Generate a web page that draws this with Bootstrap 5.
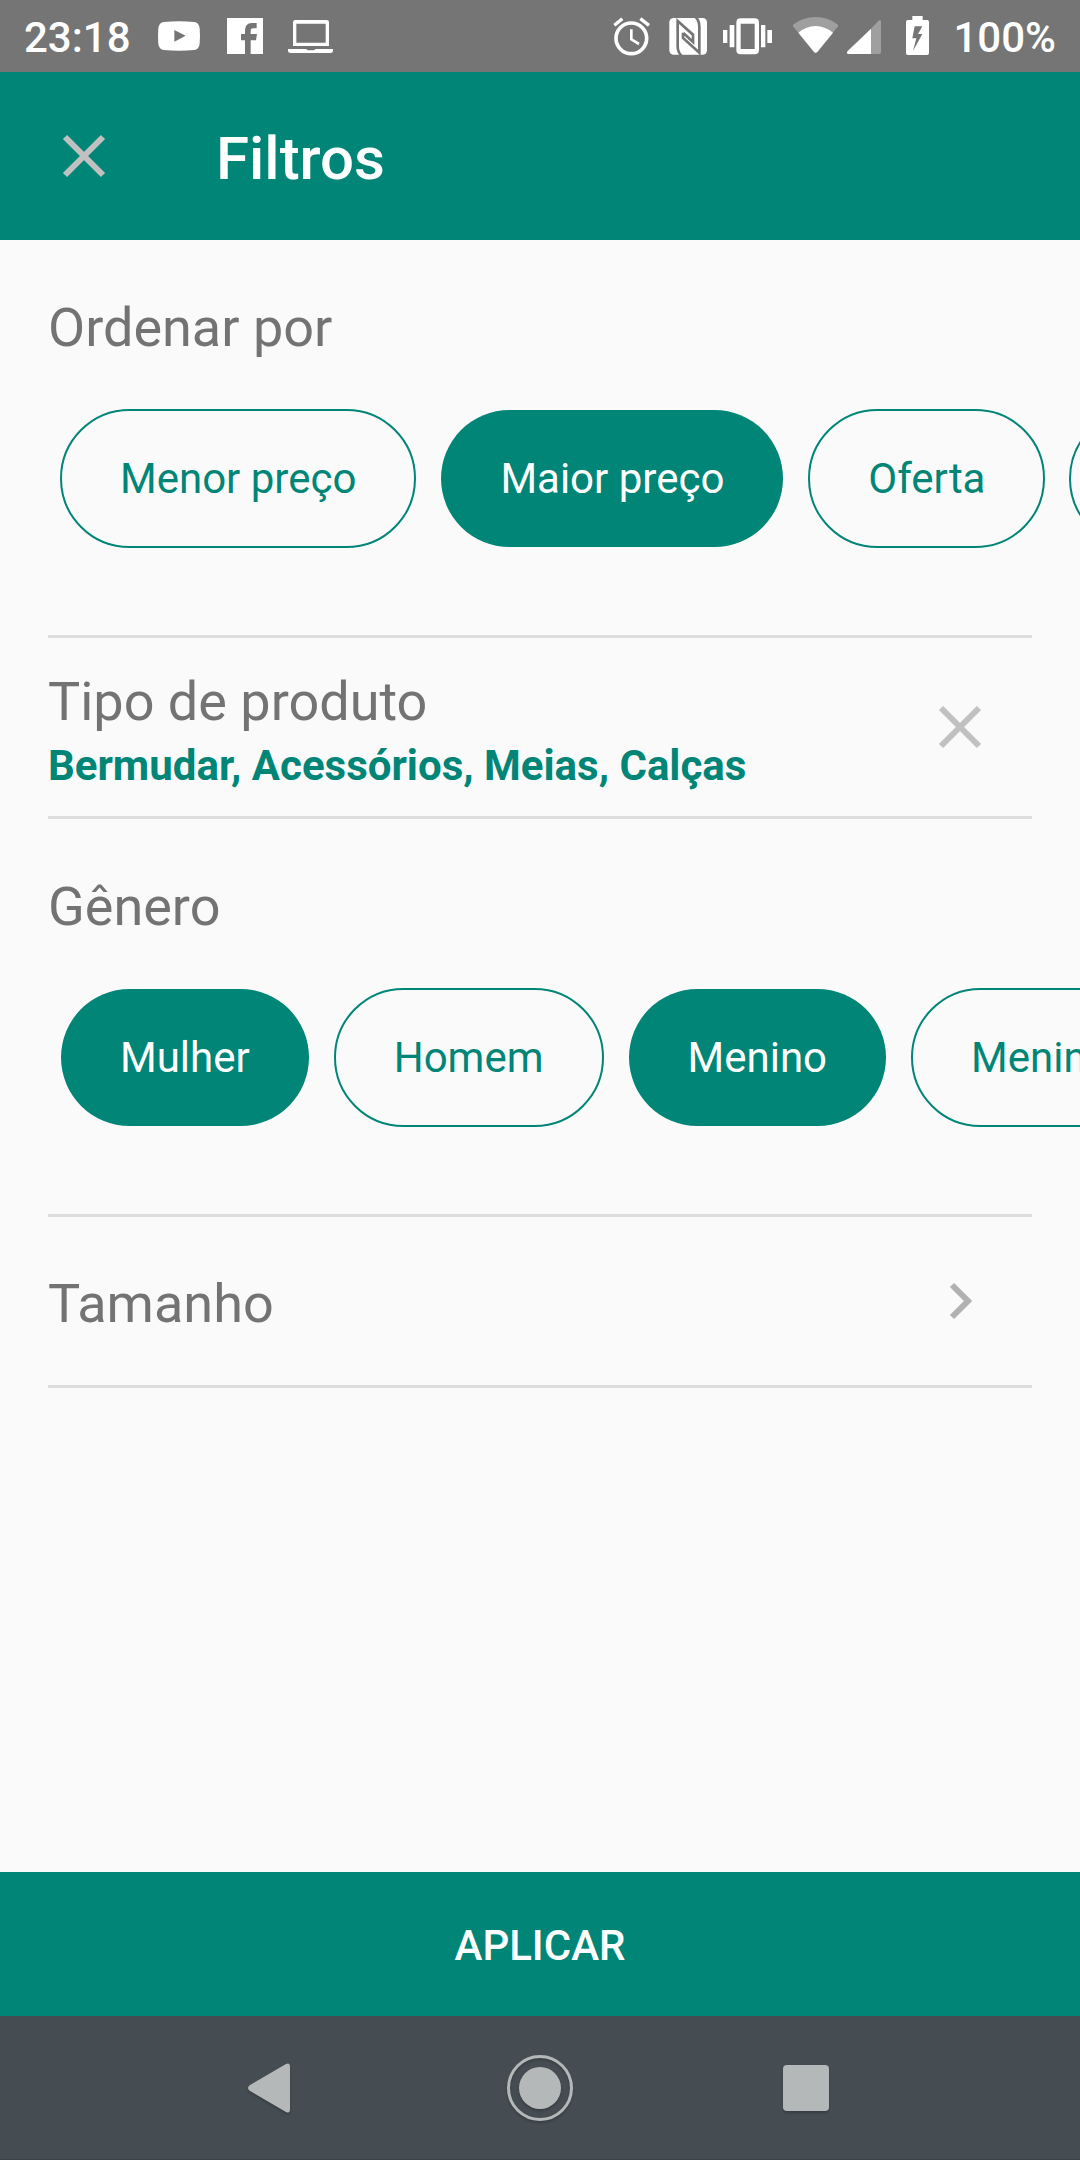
<!DOCTYPE html>
<html lang="pt-BR">
<head>
<meta charset="utf-8">
<meta name="viewport" content="width=device-width, initial-scale=1">
<title>Filtros</title>
<link href="https://cdn.jsdelivr.net/npm/bootstrap@5.3.0/dist/css/bootstrap.min.css" rel="stylesheet">
<style>
  :root { --brand: #008577; --paper: #fafafa; --ink: #737373; --rule: #dddddd; }
  body { font-family: Roboto, "Noto Sans", sans-serif; background: var(--paper); color: var(--ink); }
  svg { display: block; flex: none; }
  .status-bar { height: 72px; background: #757575; color: #fff; padding: 0 24px; font-size: 42px; line-height: 50px; font-weight: 500; }
  .status-bar svg { height: 72px; fill: #fff; }
  .status-text { padding-top: 3px; }
  .status-left { gap: 13px; }
  .status-right { gap: 11px; }
  .app-bar { height: 168px; background: var(--brand); padding-left: 48px; gap: 96px; }
  .app-title { font-size: 60px; line-height: 72px; font-weight: 500; padding-top: 5px; }
  .icon-btn { width: 72px; height: 72px; }
  .filter-block { border-bottom: 3px solid var(--rule); margin: 0 48px; }
  .chip-block { padding: 56px 0 87px; }
  .filter-title { font-size: 54px; line-height: 64px; font-weight: 400; margin: 0; }
  .chip-row { gap: 24px; margin: 49px -48px 0 0; padding-left: 12px; overflow-x: auto; scrollbar-width: none; }
  .chip-row::-webkit-scrollbar { display: none; }
  .chip { flex: none; height: 139px; border: 2px solid var(--brand); border-radius: 70px; padding: 0 58px; font-size: 42px; line-height: 135px; font-weight: 400; color: var(--brand); background-clip: padding-box; }
  .btn-check:checked + .chip { border: 1px solid transparent; padding: 1px 59px; background-color: var(--brand); color: #fff; }
  .type-block { padding: 32px 36px 25px 0; }
  .type-block .icon-btn { margin-bottom: 8px; }
  .type-value { font-size: 42px; line-height: 50px; font-weight: 700; color: var(--brand); margin: 7px 0 0; }
  .size-block { padding: 55px 36px 49px 0; color: var(--ink); }
  .apply-btn { height: 144px; background: var(--brand); font-size: 42px; line-height: 50px; font-weight: 500; padding: 4px 0 0; }
  .apply-btn:hover { background: var(--brand); }
  .nav-keys { height: 144px; background: #454d53; gap: 196px; border-bottom: 1px solid #3c4349; }
  .nav-keys svg { fill: #b4b8b9; filter: drop-shadow(0 2px 1px #0003); }
</style>
</head>
<body class="d-flex flex-column min-vh-100">

<div class="status-bar d-flex align-items-center justify-content-between">
  <div class="status-left d-flex align-items-center">
    <span class="status-text">23:18</span>
    <svg width="270" viewBox="432 0 810 216" aria-hidden="true">
      <!-- video -->
      <path fill-rule="evenodd" d="M492 66Q537 61 582 66Q597 67 599 85Q601 108 599 131Q597 148 582 150Q537 154 492 150Q477 148 475 131Q473 108 475 85Q477 67 492 66ZM523 90V125L557 107Z"/>
      <!-- social -->
      <path d="M681 54H789V162H752V121H768L771 102H752V92Q752 85 760 85H770V69H755Q735 70 735 91V102H723V121H735V162H681Z"/>
      <!-- laptop -->
      <path fill-rule="evenodd" d="M886 60H980Q987 60 987 67V138H879V67Q879 60 886 60ZM889 71V128H977V71Z"/>
      <path d="M864 147H919Q921 151 926 151H939Q945 151 946 147H999V153Q999 159 991 159H872Q864 159 864 153Z"/>
    </svg>
  </div>
  <div class="status-right d-flex align-items-center">
    <div class="d-flex">
      <!-- alarm -->
      <svg width="54" viewBox="48 0 162 216" aria-hidden="true">
        <g fill="none" stroke="#fff"><circle cx="124" cy="115" r="46" stroke-width="11"/><path d="M124 88V118L147 132" stroke-width="8"/><path d="M73 76L97 56M151 56L177 76" stroke-width="10"/></g>
      </svg>
      <!-- nfc -->
      <svg width="54" viewBox="210 0 162 216" aria-hidden="true">
        <rect x="238" y="54" width="113" height="110" rx="13"/>
        <path fill="none" stroke="#757575" stroke-width="8" d="M274 167Q263 156 263 139V63L309 104V126L280 99M317 51Q328 62 328 80V158L279 114V98"/>
      </svg>
      <!-- vibrate -->
      <svg width="68" viewBox="372 0 204 216" aria-hidden="true">
        <path fill-rule="evenodd" d="M452 55H494Q507 55 507 68V150Q507 163 494 163H452Q439 163 439 150V68Q439 55 452 55ZM452 71V147H494V71Z"/>
        <path d="M399 90H412V129H399ZM419 75H433V142H419ZM513 75H526V142H513ZM532 90H546V129H532Z"/>
      </svg>
      <!-- wifi -->
      <svg width="62" viewBox="576 0 186 216" aria-hidden="true">
        <path fill="#9f9f9f" d="M609 79V74Q638 51 677 51Q715 51 744 74V79L682 156Q677 161 672 156Z"/>
        <path d="M625 98Q649 78 677 78Q704 78 729 98L682 156Q677 161 672 156Z"/>
      </svg>
      <!-- mobile signal -->
      <svg width="50" viewBox="762 0 150 216" aria-hidden="true">
        <path fill="#9f9f9f" d="M843 86L867 61Q873 58 873 65V156Q873 162 867 162H843Z"/>
        <path d="M843 86V162H774Q768 160 773 153Z"/>
      </svg>
      <!-- battery -->
      <svg width="48" viewBox="912 0 144 216" aria-hidden="true">
        <path fill-rule="evenodd" d="M967 48H998V60H1012Q1017 60 1017 66V160Q1017 165 1011 165H954Q948 165 948 160V66Q948 60 954 60H967ZM974 79L967 115H979L969 153L997 102H984L997 79Z"/>
      </svg>
    </div>
    <span class="status-text">100%</span>
  </div>
</div>

<header class="app-bar d-flex align-items-center">
  <button type="button" class="icon-btn btn border-0 p-0" aria-label="Fechar">
    <svg width="72" height="72" viewBox="0 0 72 72" stroke="#c1c1c1" stroke-width="6"><path d="M17 17L55 55M55 17L17 55"/></svg>
  </button>
  <h1 class="app-title text-white mb-0">Filtros</h1>
</header>

<main class="flex-grow-1 overflow-hidden">
  <section class="filter-block chip-block" aria-labelledby="sort-title">
    <h2 class="filter-title" id="sort-title">Ordenar por</h2>
    <div class="chip-row d-flex" role="radiogroup" aria-labelledby="sort-title">
      <input class="btn-check" type="radio" name="sort" id="sort-low"><label class="chip btn" for="sort-low">Menor preço</label>
      <input class="btn-check" type="radio" name="sort" id="sort-high" checked><label class="chip btn" for="sort-high">Maior preço</label>
      <input class="btn-check" type="radio" name="sort" id="sort-sale"><label class="chip btn" for="sort-sale">Oferta</label>
      <input class="btn-check" type="radio" name="sort" id="sort-new"><label class="chip btn" for="sort-new">Novidades</label>
    </div>
  </section>

  <section class="filter-block type-block d-flex align-items-center justify-content-between">
    <div>
      <h2 class="filter-title">Tipo de produto</h2>
      <p class="type-value">Bermudar, Acessórios, Meias, Calças</p>
    </div>
    <button type="button" class="icon-btn btn border-0 p-0" aria-label="Limpar tipo de produto">
      <svg width="72" height="72" viewBox="0 0 72 72" stroke="#c1c1c1" stroke-width="6"><path d="M17 17L55 55M55 17L17 55"/></svg>
    </button>
  </section>

  <section class="filter-block chip-block" aria-labelledby="gender-title">
    <h2 class="filter-title" id="gender-title">Gênero</h2>
    <div class="chip-row d-flex" role="group" aria-labelledby="gender-title">
      <input class="btn-check" type="checkbox" id="g-woman" checked><label class="chip btn" for="g-woman">Mulher</label>
      <input class="btn-check" type="checkbox" id="g-man"><label class="chip btn" for="g-man">Homem</label>
      <input class="btn-check" type="checkbox" id="g-boy" checked><label class="chip btn" for="g-boy">Menino</label>
      <input class="btn-check" type="checkbox" id="g-girl"><label class="chip btn" for="g-girl">Menina</label>
    </div>
  </section>

  <a href="#tamanho" class="filter-block size-block d-flex align-items-center justify-content-between text-decoration-none">
    <span class="filter-title">Tamanho</span>
    <svg width="72" height="64" viewBox="0 0 72 64" fill="none" stroke="#b1b1b1" stroke-width="6" aria-hidden="true"><path d="M28 13L44 29L28 45"/></svg>
  </a>
</main>

<button type="button" class="apply-btn btn rounded-0 border-0 w-100 text-white text-uppercase">Aplicar</button>

<nav class="nav-keys d-flex align-items-center justify-content-center" aria-label="Sistema">
  <button type="button" class="btn border-0 p-0" aria-label="Voltar">
    <svg width="72" height="72" viewBox="0 0 72 72"><path d="M50 12Q54 10 54 15V57Q54 62 50 60L14 39Q10 36 14 33Z"/></svg>
  </button>
  <button type="button" class="btn border-0 p-0" aria-label="Início">
    <svg width="72" height="72" viewBox="0 0 72 72"><circle cx="36" cy="36" r="21"/><circle cx="36" cy="36" r="31.5" fill="none" stroke="#b4b8b9" stroke-width="3"/></svg>
  </button>
  <button type="button" class="btn border-0 p-0" aria-label="Recentes">
    <svg width="72" height="72" viewBox="0 0 72 72"><rect x="11" y="13" width="46" height="46" rx="4"/></svg>
  </button>
</nav>

<script src="https://cdn.jsdelivr.net/npm/bootstrap@5.3.0/dist/js/bootstrap.bundle.min.js"></script>
</body>
</html>
